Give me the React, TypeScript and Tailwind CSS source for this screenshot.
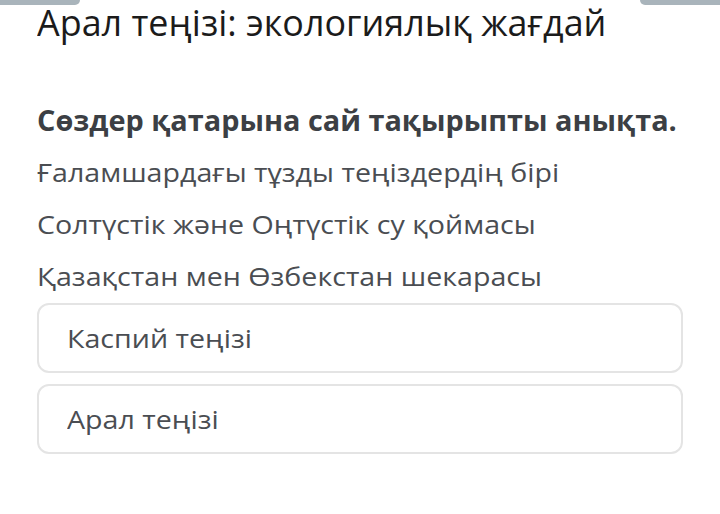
const lines = [
  "Ғаламшардағы тұзды теңіздердің бірі",
  "Солтүстік және Оңтүстік су қоймасы",
  "Қазақстан мен Өзбекстан шекарасы",
];

const options = ["Каспий теңізі", "Арал теңізі"];

export default function App() {
  return (
    <div className="relative h-[514px] w-[720px] overflow-hidden bg-white font-['Open_Sans',sans-serif]">
      {/* tabs peeking from above */}
      <div className="absolute left-0 top-0 h-[5px] w-[80px] rounded-br-[6px] bg-[#a9b4bb]" />
      <div className="absolute right-0 top-0 h-[5px] w-[80px] rounded-bl-[6px] bg-[#a9b4bb]" />

      <div className="flex flex-col px-[37px]">
        <h1 className="mt-[-4px] origin-left scale-x-[0.97] whitespace-nowrap text-[37px] leading-[52px] text-[#1b1b1b]">
          Арал теңізі: экологиялық жағдай
        </h1>

        <p className="mt-[52px] origin-left scale-x-[1.03] whitespace-nowrap text-[28px] font-bold leading-[40px] text-[#3c3f44]">
          Сөздер қатарына сай тақырыпты анықта.
        </p>
        {lines.map((l) => (
          <p
            key={l}
            className="mt-[12px] origin-left scale-x-[1.1] whitespace-nowrap text-[26px] leading-[40px] text-[#4a4d52]"
          >
            {l}
          </p>
        ))}

        <div className="mt-[7px] flex w-[646px] flex-col gap-[11px]">
          {options.map((o) => (
            <div
              key={o}
              className="flex h-[70px] items-center rounded-[12px] border-2 border-[#e4e4e4] px-[28px]"
            >
              <span className="origin-left scale-x-[1.1] whitespace-nowrap text-[26px] text-[#4a4d52]">
                {o}
              </span>
            </div>
          ))}
        </div>
      </div>
    </div>
  );
}
